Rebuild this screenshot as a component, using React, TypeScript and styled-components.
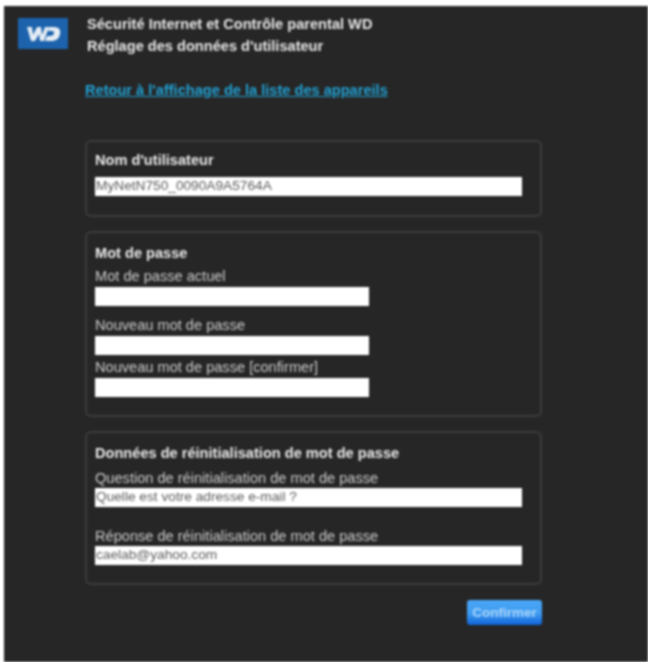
import { createGlobalStyle } from "styled-components";
import styled from "styled-components";

const GlobalStyle = createGlobalStyle`
  html, body {
    margin: 0;
    padding: 0;
    background: #ffffff;
    overflow: hidden;
  }
`;

const Page = styled.div`
  box-sizing: border-box;
  width: 648px;
  height: 662px;
  padding: 6px 0 0 4px;
  font-family: "Liberation Sans", Arial, sans-serif;
  filter: blur(0.9px);
`;

const Screen = styled.div`
  box-sizing: border-box;
  height: 100%;
  background: #262626;
  padding: 6px 0 0 14px;
`;

const Header = styled.header`
  display: flex;
  gap: 19px;
  height: 71px;
`;

const Logo = styled.div`
  width: 50px;
  height: 31px;
  margin-top: 6px;
  background: #1c62ac;
  display: flex;
  align-items: center;
  justify-content: center;
`;

const HeaderText = styled.div`
  padding-top: 1px;
`;

const HeaderLine = styled.div`
  color: #e8e8e8;
  font-size: 14.6px;
  font-weight: bold;
  line-height: 22px;
`;

const BackLink = styled.a`
  display: block;
  margin-left: 67px;
  color: #21a0d2;
  font-size: 14.6px;
  font-weight: bold;
  line-height: 15px;
  height: 17px;
  text-decoration: underline;
`;

const Main = styled.main`
  margin: 40px 0 0 67px;
  display: flex;
  flex-direction: column;
  gap: 14px;
`;

const Box = styled.section<{ $height: number }>`
  box-sizing: border-box;
  width: 457px;
  height: ${(p) => p.$height}px;
  padding: 0 8px;
  border: 2px solid #3c3c3c;
  border-radius: 6px;
`;

const BoxTitle = styled.h2<{ $top: number }>`
  margin: ${(p) => p.$top}px 0 0;
  color: #eaeaea;
  font-size: 14.6px;
  font-weight: bold;
  line-height: 14px;
`;

const FieldLabel = styled.label<{ $top: number }>`
  display: block;
  margin-top: ${(p) => p.$top}px;
  color: #cccccc;
  font-size: 14.6px;
  line-height: 14px;
`;

const Input = styled.div<{ $top: number; $short?: boolean }>`
  box-sizing: border-box;
  width: ${(p) => (p.$short ? 274 : 427)}px;
  height: 19px;
  margin-top: ${(p) => p.$top}px;
  padding: 0 1px;
  background: #ffffff;
  color: #5c5c5c;
  font-size: 13.7px;
  line-height: 18px;
`;

const Actions = styled.div`
  display: flex;
  justify-content: flex-end;
  margin: 15px 0 0 67px;
  width: 457px;
`;

const ConfirmButton = styled.button`
  box-sizing: border-box;
  width: 75px;
  height: 25px;
  padding: 0;
  border: none;
  border-radius: 3px;
  background: linear-gradient(#4aa6f5, #3f9cf2 55%, #0f62d8);
  color: #a9d4fa;
  font-family: inherit;
  font-size: 13.5px;
  font-weight: bold;
`;

const App: React.FC = () => {
  return (
    <>
      <GlobalStyle />
      <Page>
        <Screen>
          <Header>
            <Logo>
              <svg width="36" height="18" viewBox="0 0 36 18">
                <path
                  d="M2 2h5l1 8 4-8h4l1 8 3-8h4l-5 14h-4l-1-7-4 7H6z"
                  fill="#e6eef6"
                />
                <path
                  d="M24 2h5c5 0 7 3 6 7-1 5-4 7-9 7h-6l2-5h3c2 0 4-1 4-3s-1-2-3-2h-3z"
                  fill="#e6eef6"
                />
              </svg>
            </Logo>
            <HeaderText>
              <HeaderLine>Sécurité Internet et Contrôle parental WD</HeaderLine>
              <HeaderLine>Réglage des données d'utilisateur</HeaderLine>
            </HeaderText>
          </Header>
          <BackLink>Retour à l'affichage de la liste des appareils</BackLink>
          <Main>
            <Box $height={77}>
              <BoxTitle $top={11}>Nom d'utilisateur</BoxTitle>
              <Input $top={10}>MyNetN750_0090A9A5764A</Input>
            </Box>
            <Box $height={186}>
              <BoxTitle $top={13}>Mot de passe</BoxTitle>
              <FieldLabel $top={9}>Mot de passe actuel</FieldLabel>
              <Input $short $top={4} />
              <FieldLabel $top={12}>Nouveau mot de passe</FieldLabel>
              <Input $short $top={4} />
              <FieldLabel $top={5}>Nouveau mot de passe [confirmer]</FieldLabel>
              <Input $short $top={4} />
            </Box>
            <Box $height={154}>
              <BoxTitle $top={13}>Données de réinitialisation de mot de passe</BoxTitle>
              <FieldLabel $top={11}>Question de réinitialisation de mot de passe</FieldLabel>
              <Input $top={3}>Quelle est votre adresse e-mail ?</Input>
              <FieldLabel $top={22}>Réponse de réinitialisation de mot de passe</FieldLabel>
              <Input $top={3}>caelab@yahoo.com</Input>
            </Box>
          </Main>
          <Actions>
            <ConfirmButton>Confirmer</ConfirmButton>
          </Actions>
        </Screen>
      </Page>
    </>
  );
};

export default App;
